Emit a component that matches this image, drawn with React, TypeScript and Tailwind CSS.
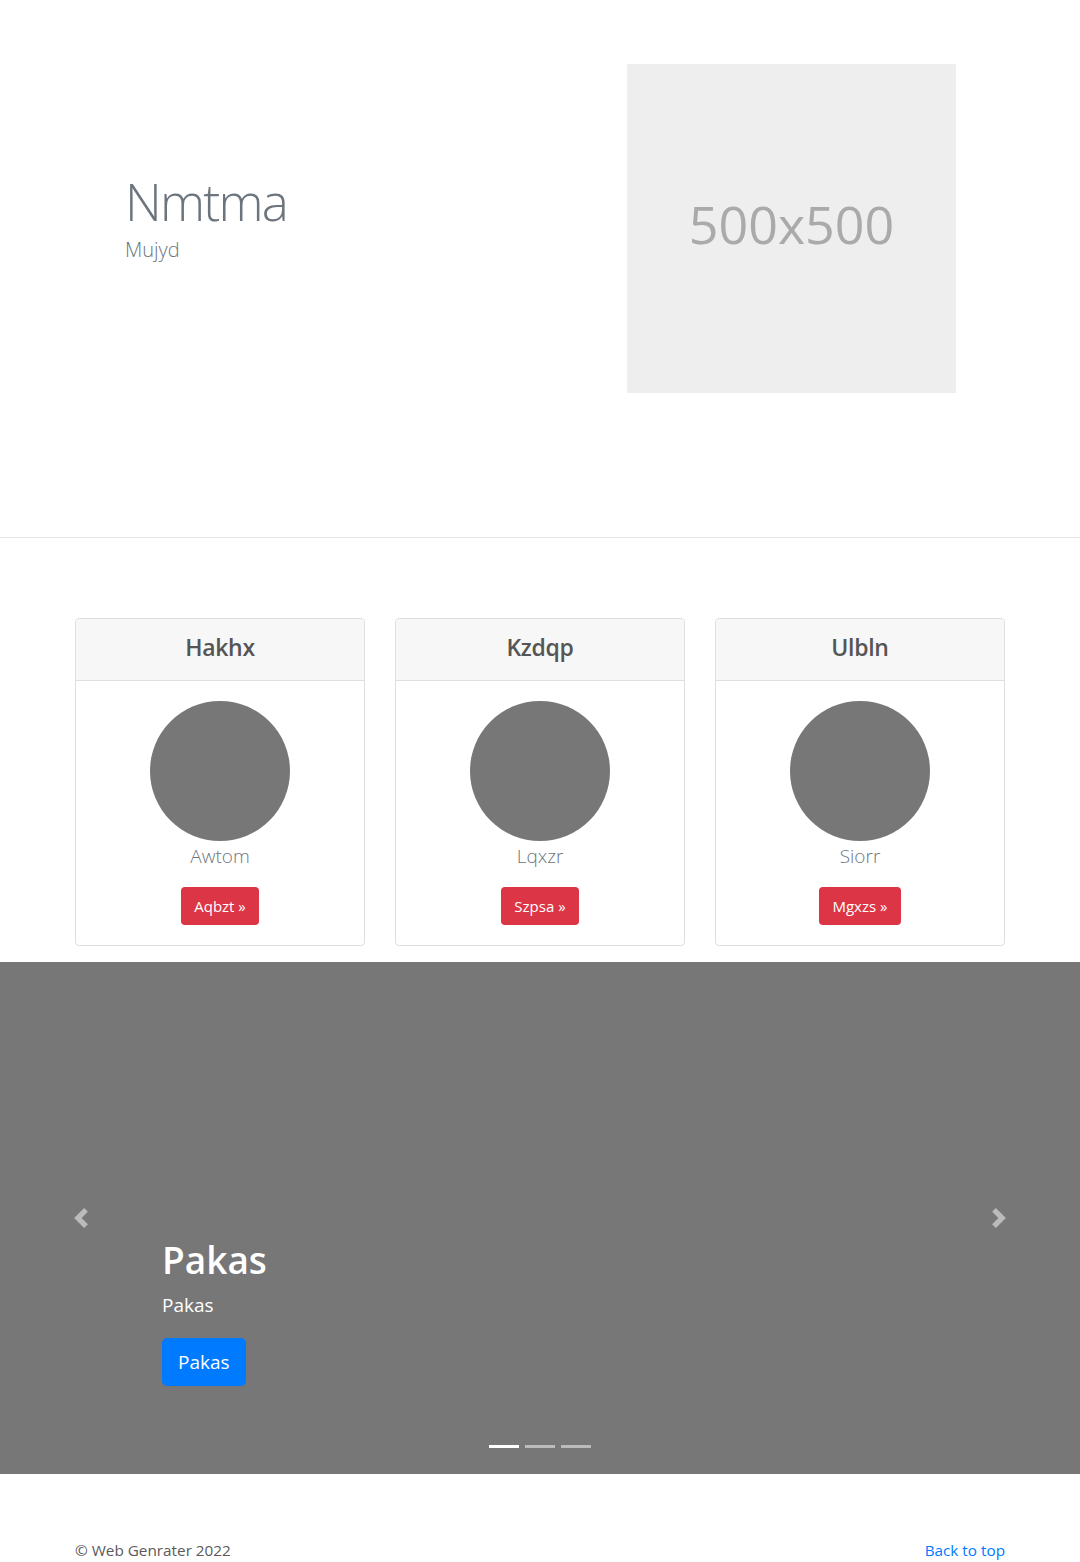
import React from 'react'

const font = { fontFamily: '"Open Sans", "Noto Sans", Arial, sans-serif' }

const cards = [
    { title: 'Hakhx', name: 'Awtom', btn: 'Aqbzt' },
    { title: 'Kzdqp', name: 'Lqxzr', btn: 'Szpsa' },
    { title: 'Ulbln', name: 'Siorr', btn: 'Mgxzs' },
]

function Chevron({ dir }: { dir: 'prev' | 'next' }) {
    return (
        <svg viewBox="0 0 8 8" className="w-5 h-5" fill="#fff" opacity={0.5}>
            {dir === 'prev' ? (
                <path d="M5.25 0l-4 4 4 4 1.5-1.5-2.5-2.5 2.5-2.5-1.5-1.5z" />
            ) : (
                <path d="M2.75 0l-1.5 1.5 2.5 2.5-2.5 2.5 1.5 1.5 4-4-4-4z" />
            )}
        </svg>
    )
}

function App() {
    return (
        <div className="bg-white text-[#5a5a5a]" style={font}>
            {/* hero */}
            <section className="border-b border-[#e5e5e5] pt-[64px] pb-[144px]">
                <div className="w-[960px] mx-auto px-[15px] flex">
                    <div className="flex-1 pl-[50px] pt-[106px]">
                        <h1 className="text-[51px] leading-[62px] font-light text-[#6c757d] tracking-[-1.8px]">Nmtma</h1>
                        <p className="text-[20px] leading-[30px] font-light text-[#6c757d] mt-[3px]">Mujyd</p>
                    </div>
                    <div className="w-[329px] h-[329px] mr-[49px] bg-[#eeeeee] flex items-center justify-center">
                        <span className="text-[52px] text-[#aaaaaa] -mt-[10px]">500x500</span>
                    </div>
                </div>
            </section>

            {/* cards */}
            <section className="pt-[80px] pb-4">
                <div className="w-[960px] mx-auto px-[15px] grid grid-cols-3 gap-[30px]">
                    {cards.map((c) => (
                        <div key={c.title} className="border border-[#dfdfdf] rounded-[4px] overflow-hidden">
                            <div className="h-[62px] bg-[#f7f7f7] border-b border-[#dfdfdf] flex items-center justify-center">
                                <h4 className="text-[23px] font-semibold text-[#555] tracking-[-0.3px] -mt-[5px]">{c.title}</h4>
                            </div>
                            <div className="p-5 flex flex-col items-center">
                                <div className="w-[140px] h-[140px] rounded-full bg-[#777777]" />
                                <p className="text-[19px] leading-[30px] font-light text-[#6c757d] mb-4">{c.name}</p>
                                <button className="h-[38px] px-[13px] rounded-[4px] bg-[#dc3545] text-white text-[15px]">
                                    {c.btn} »
                                </button>
                            </div>
                        </div>
                    ))}
                </div>
            </section>

            {/* carousel */}
            <section className="relative h-[512px] bg-[#777777] flex flex-col justify-end pl-[162px] pb-[88px] text-white">
                <button className="absolute left-0 top-0 h-full w-[162px] flex items-center justify-center">
                    <Chevron dir="prev" />
                </button>
                <button className="absolute right-0 top-0 h-full w-[162px] flex items-center justify-center">
                    <Chevron dir="next" />
                </button>
                <h1 className="text-[37px] leading-[48px] font-semibold mb-[6px] -mt-[2px]">Pakas</h1>
                <p className="text-[19px] leading-[30px] mb-[18px]">Pakas</p>
                <div>
                    <button className="h-[48px] px-4 rounded-[5px] bg-[#007bff] text-white text-[19px]">Pakas</button>
                </div>
                <div className="absolute left-0 right-0 bottom-[26px] flex justify-center gap-[6px]">
                    <span className="w-[30px] h-[3px] bg-white" />
                    <span className="w-[30px] h-[3px] bg-[#bbbbbb]" />
                    <span className="w-[30px] h-[3px] bg-[#bbbbbb]" />
                </div>
            </section>

            {/* footer */}
            <footer className="pt-[64px] pb-[48px]">
                <div className="w-[960px] mx-auto px-[15px] flex justify-between text-[15.3px] leading-6">
                    <p>© Web Genrater 2022</p>
                    <a href="#" className="text-[#007bff]">Back to top</a>
                </div>
            </footer>
        </div>
    )
}

export default App
